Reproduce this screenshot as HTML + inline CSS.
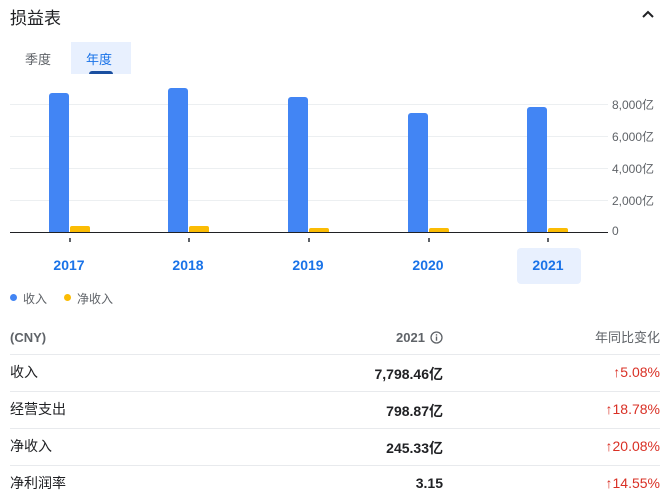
<!DOCTYPE html>
<html><head><meta charset="utf-8"><style>
*{margin:0;padding:0;box-sizing:border-box}
body{width:667px;height:501px;background:#fff;position:relative;overflow:hidden;font-family:"Liberation Sans","Noto Sans CJK SC",sans-serif;color:#202124}
.a{position:absolute}
.g{position:absolute;left:10px;width:598px;height:1px;background:#eceff1}
.bb{position:absolute;width:20px;background:#4285f4;border-radius:3px 3px 0 0}
.yb{position:absolute;width:20px;background:#fbbc04;border-radius:2px 2px 0 0}
.yl{position:absolute;font-size:12px;color:#5f6368;left:612px}
.yr{position:absolute;top:257px;font-size:14px;font-weight:bold;color:#1a73e8;width:60px;text-align:center}
.tk{position:absolute;top:238px;width:2px;height:4px;background:#5f6368}
.hl{position:absolute;left:10px;width:650px;height:1px;background:#e8eaed}
.r{position:absolute;font-size:14px}
.v{position:absolute;right:224px;font-size:14px;font-weight:bold}
.c{position:absolute;right:7px;font-size:14px;color:#d93025}
</style></head><body>
<div class="a" style="left:10px;top:4px;font-size:17px">损益表</div>
<svg class="a" style="left:641px;top:9px" width="14" height="10"><path d="M2 8 L7 3 L12 8" stroke="#202124" stroke-width="2" fill="none"/></svg>
<div class="a" style="left:25px;top:49px;font-size:13px;color:#5f6368">季度</div>
<div class="a" style="left:71px;top:42px;width:60px;height:32px;background:#e8f0fe"></div>
<div class="a" style="left:86px;top:49px;font-size:13px;color:#1a73e8">年度</div>
<div class="a" style="left:89px;top:71px;width:24px;height:3px;background:#1a4fa0;border-radius:3px 3px 0 0"></div>

<div class="g" style="top:104px"></div><div class="g" style="top:136px"></div><div class="g" style="top:168px"></div><div class="g" style="top:200px"></div>
<div class="a" style="left:10px;top:232px;width:598px;height:1px;background:#202124"></div>
<div class="yl" style="top:96px">8,000亿</div><div class="yl" style="top:128px">6,000亿</div><div class="yl" style="top:160px">4,000亿</div><div class="yl" style="top:192px">2,000亿</div><div class="yl" style="top:224px">0</div>

<div class="bb" style="left:49px;top:93px;height:139px"></div><div class="yb" style="left:70px;top:226px;height:6px"></div>
<div class="bb" style="left:168px;top:88px;height:144px"></div><div class="yb" style="left:189px;top:226px;height:6px"></div>
<div class="bb" style="left:288px;top:97px;height:135px"></div><div class="yb" style="left:309px;top:228px;height:4px"></div>
<div class="bb" style="left:408px;top:113px;height:119px"></div><div class="yb" style="left:429px;top:228px;height:4px"></div>
<div class="bb" style="left:527px;top:107px;height:125px"></div><div class="yb" style="left:548px;top:228px;height:4px"></div>

<div class="tk" style="left:69px"></div><div class="tk" style="left:188px"></div><div class="tk" style="left:308px"></div><div class="tk" style="left:428px"></div><div class="tk" style="left:547px"></div>
<div class="a" style="left:517px;top:248px;width:64px;height:36px;background:#e8f0fe;border-radius:4px"></div>
<div class="yr" style="left:39px">2017</div><div class="yr" style="left:158px">2018</div><div class="yr" style="left:278px">2019</div><div class="yr" style="left:398px">2020</div><div class="yr" style="left:518px">2021</div>

<div class="a" style="left:10px;top:294px;width:7px;height:7px;border-radius:50%;background:#4285f4"></div>
<div class="a" style="left:23px;top:290px;font-size:12px;color:#5f6368">收入</div>
<div class="a" style="left:64px;top:294px;width:7px;height:7px;border-radius:50%;background:#fbbc04"></div>
<div class="a" style="left:77px;top:290px;font-size:12px;color:#5f6368">净收入</div>

<div class="a" style="left:10px;top:330px;font-size:13px;font-weight:bold;color:#5f6368">(CNY)</div>
<div class="a" style="left:396px;top:330px;font-size:13px;font-weight:bold;color:#5f6368">2021</div>
<svg class="a" style="left:430px;top:331px" width="13" height="13"><circle cx="6.5" cy="6.5" r="5.5" stroke="#5f6368" stroke-width="1.3" fill="none"/><rect x="5.8" y="5.5" width="1.4" height="4.2" fill="#5f6368"/><rect x="5.8" y="3.2" width="1.4" height="1.4" fill="#5f6368"/></svg>
<div class="a" style="right:7px;top:327px;font-size:13px;color:#5f6368">年同比变化</div>

<div class="hl" style="top:354px"></div><div class="hl" style="top:391px"></div><div class="hl" style="top:428px"></div><div class="hl" style="top:465px"></div>

<div class="r" style="left:10px;top:362px">收入</div><div class="v" style="top:364px">7,798.46亿</div><div class="c" style="top:364px">↑5.08%</div>
<div class="r" style="left:10px;top:399px">经营支出</div><div class="v" style="top:401px">798.87亿</div><div class="c" style="top:401px">↑18.78%</div>
<div class="r" style="left:10px;top:436px">净收入</div><div class="v" style="top:438px">245.33亿</div><div class="c" style="top:438px">↑20.08%</div>
<div class="r" style="left:10px;top:473px">净利润率</div><div class="v" style="top:475px">3.15</div><div class="c" style="top:475px">↑14.55%</div>
</body></html>
